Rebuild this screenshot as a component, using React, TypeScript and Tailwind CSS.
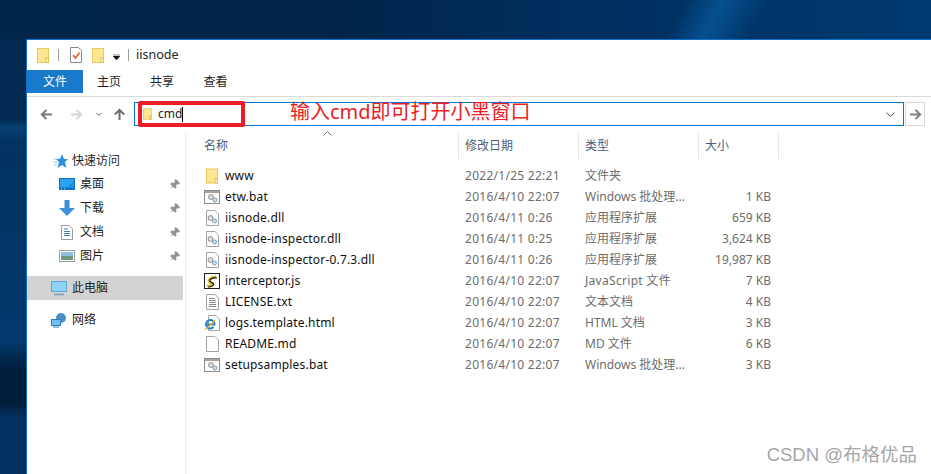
import { Pin } from 'lucide-react';
import type { ReactNode } from 'react';

const files = [
  { name: 'www', date: '2022/1/25 22:21', type: '文件夹', size: '', icon: 'folder' },
  { name: 'etw.bat', date: '2016/4/10 22:07', type: 'Windows 批处理...', size: '1 KB', icon: 'bat' },
  { name: 'iisnode.dll', date: '2016/4/11 0:26', type: '应用程序扩展', size: '659 KB', icon: 'dll' },
  { name: 'iisnode-inspector.dll', date: '2016/4/11 0:25', type: '应用程序扩展', size: '3,624 KB', icon: 'dll' },
  { name: 'iisnode-inspector-0.7.3.dll', date: '2016/4/11 0:26', type: '应用程序扩展', size: '19,987 KB', icon: 'dll' },
  { name: 'interceptor.js', date: '2016/4/10 22:07', type: 'JavaScript 文件', size: '7 KB', icon: 'js' },
  { name: 'LICENSE.txt', date: '2016/4/10 22:07', type: '文本文档', size: '4 KB', icon: 'txt' },
  { name: 'logs.template.html', date: '2016/4/10 22:07', type: 'HTML 文档', size: '3 KB', icon: 'ie' },
  { name: 'README.md', date: '2016/4/10 22:07', type: 'MD 文件', size: '6 KB', icon: 'blank' },
  { name: 'setupsamples.bat', date: '2016/4/10 22:07', type: 'Windows 批处理...', size: '3 KB', icon: 'bat' },
];

function FolderIcon({ className = 'w-3 h-[15px]' }: { className?: string }) {
  return (
    <svg viewBox="0 0 12 15" className={className}>
      <rect x="0.5" y="0.5" width="11" height="14" fill="#fde592" stroke="#eac95f" />
      <rect x="9" y="10" width="2.5" height="4.5" fill="#fff3c4" stroke="#e0b93f" strokeWidth="0.8" />
    </svg>
  );
}

function Gears({ x = 3, y = 4 }: { x?: number; y?: number }) {
  return (
    <g>
      <circle cx={x + 3} cy={y + 3} r="2.4" fill="#e2e2e2" stroke="#8c8c8c" />
      <circle cx={x + 7} cy={y + 6} r="2" fill="#cfe3f3" stroke="#7f9db5" />
    </g>
  );
}

function FileIcon({ kind }: { kind: string }) {
  if (kind === 'folder') return <FolderIcon className="w-3 h-4" />;
  if (kind === 'bat') {
    return (
      <svg viewBox="0 0 16 14" className="w-4 h-[14px]">
        <rect x="0.5" y="0.5" width="15" height="13" fill="#fff" stroke="#8a8a8a" />
        <rect x="1" y="1" width="14" height="2" fill="#a5a5a5" />
        <Gears x={4} y={4} />
      </svg>
    );
  }
  if (kind === 'dll') {
    return (
      <svg viewBox="0 0 13 16" className="w-[13px] h-4">
        <path d="M.5.5H9L12.5 4V15.5H.5Z" fill="#fdfdfd" stroke="#a3a3a3" />
        <Gears x={1.5} y={5} />
      </svg>
    );
  }
  if (kind === 'js') {
    return (
      <svg viewBox="0 0 16 16" className="w-4 h-4">
        <rect x="0.5" y="0.5" width="15" height="15" fill="#fff" stroke="#222" />
        <path d="M3 12.5C7 14 11 12 6 9.5C3 8 6 4 12 3.5" fill="none" stroke="#d6bd1c" strokeWidth="2.6" />
        <path d="M4 14C9 14 12 11 7 9C4 7.5 7 4.5 13 5" fill="none" stroke="#111" strokeWidth="1.2" />
      </svg>
    );
  }
  if (kind === 'txt') {
    return (
      <svg viewBox="0 0 13 16" className="w-[13px] h-4">
        <path d="M.5.5H9L12.5 4V15.5H.5Z" fill="#fff" stroke="#a3a3a3" />
        <path d="M3 4.5H9M3 6.5H10M3 8.5H10M3 10.5H10M3 12.5H10" stroke="#8a8a8a" />
      </svg>
    );
  }
  if (kind === 'ie') {
    return (
      <svg viewBox="0 0 16 16" className="w-4 h-4">
        <path d="M4.500.5H12L15.500 4V15.500H4.500Z" fill="#fff" stroke="#a3a3a3" />
        <path d="M3 9.500H10.500A4.200 4.200 0 1 0 9.500 12" fill="none" stroke="#1f80d4" strokeWidth="2" />
        <path d="M0.700 14C2 15 6 11 11 5" fill="none" stroke="#f0b429" strokeWidth="1.300" />
      </svg>
    );
  }
  return (
    <svg viewBox="0 0 13 16" className="w-[13px] h-4">
      <path d="M.5.5H9L12.5 4V15.5H.5Z" fill="#fff" stroke="#a3a3a3" />
    </svg>
  );
}

function ArrowIcon({ dir, color }: { dir: 'left' | 'right' | 'up'; color: string }) {
  const d = dir === 'left' ? 'M13 7H2M7 2L2 7L7 12' : dir === 'right' ? 'M1 7H12M7 2L12 7L7 12' : 'M7 13V2M2 7L7 2L12 7';
  return (
    <svg viewBox="0 0 14 14" className="w-[13px] h-[13px]">
      <path d={d} fill="none" stroke={color} strokeWidth="2.2" />
    </svg>
  );
}

function NavPin() {
  return <Pin className="w-[11px] h-[11px] text-[#8d9499] fill-[#8d9499] rotate-45" />;
}

const navIcons: Record<string, ReactNode> = {
  桌面: (
    <svg viewBox="0 0 16 12" className="w-4 h-3">
      <rect width="16" height="12" fill="#0b6fc4" />
      <path d="M1 1H15V9.500H1Z" fill="#2ba3f2" />
      <path d="M8 9.500L15 3V9.500Z" fill="#1c8fe2" />
      <path d="M2 11H3M5 11H6" stroke="#cfe8fb" />
    </svg>
  ),
  下载: (
    <svg viewBox="0 0 16 16" className="w-4 h-4">
      <path d="M5.500 0H10.500V8H16L8 16L0 8H5.500Z" fill="#3f8fdc" />
    </svg>
  ),
  文档: (
    <svg viewBox="0 0 12 15" className="w-3 h-[15px]">
      <path d="M.5.5H8L11.500 4V14.500H.5Z" fill="#fff" stroke="#9a9a9a" />
      <path d="M3 4H7M3 6.500H9M3 8.500H9M3 10.500H9" stroke="#3f7fb8" />
    </svg>
  ),
  图片: (
    <svg viewBox="0 0 16 12" className="w-4 h-3">
      <rect x="0.5" y="0.5" width="15" height="11" fill="#fff" stroke="#9a9a9a" />
      <rect x="2" y="2" width="12" height="4" fill="#8fbde0" />
      <rect x="2" y="6" width="12" height="4" fill="#6f9a80" />
    </svg>
  ),
};

export default function App() {
  return (
    <div className="w-[931px] h-[474px] relative overflow-hidden flex flex-col bg-[linear-gradient(180deg,#02294f_0%,#02294f_25%,#063f73_27%,#03335f_30%,#023a6e_72%,#011d3c_78%,#011d3c_85%,#03305e_88%,#03305e_100%)] font-['Noto_Sans','Noto_Sans_CJK_SC',sans-serif] text-[12px] text-[#1e1e1e]">
      {/* wallpaper band above the window */}
      <div className="h-[39px] shrink-0 bg-[linear-gradient(118deg,transparent_0%,transparent_72%,#05508f_76%,transparent_81%),linear-gradient(90deg,#01264c_0%,#012448_35%,#002c5a_55%,#003a72_100%)]" />
      <div className="flex-1 flex pl-[26px] min-h-0">
        <div className="flex-1 flex flex-col bg-white border-t border-l border-[#0e6fc6]">
          {/* title bar */}
          <div className="h-[30px] flex items-center pl-[10px] shrink-0">
            <FolderIcon />
            <div className="w-px h-3 bg-[#9a9a9a] ml-[9px] mr-[11px]" />
            <svg viewBox="0 0 12 16" className="w-3 h-4">
              <path d="M.5.5H8.500L11.500 3.500V15.500H.5Z" fill="#fff" stroke="#8a8a8a" />
              <path d="M3 8L5.500 11L9.500 5.500" fill="none" stroke="#e0592a" strokeWidth="1.500" />
            </svg>
            <FolderIcon className="w-3 h-[15px] ml-[10px]" />
            <svg viewBox="0 0 7 6" className="w-[7px] h-[6px] ml-[9px] mt-1">
              <path d="M0 0H7M0 2H7L3.500 6Z" fill="#111" stroke="#111" strokeWidth="0.5" />
            </svg>
            <div className="w-px h-3 bg-[#9a9a9a] ml-[8px] mr-[7px]" />
            <span className="text-[12.5px]">iisnode</span>
          </div>
          {/* ribbon tabs */}
          <div className="h-[27px] flex shrink-0 border-b border-[#dadada]">
            <div className="w-[56px] h-[23px] bg-[#1979ca] text-white flex items-center justify-center">文件</div>
            <div className="w-[52px] h-[23px] flex items-center justify-center">主页</div>
            <div className="w-[54px] h-[23px] flex items-center justify-center">共享</div>
            <div className="w-[53px] h-[23px] flex items-center justify-center">查看</div>
          </div>
          {/* address bar */}
          <div className="h-[35px] flex items-start pt-[5px] shrink-0">
            <div className="flex items-center w-[107px] h-6 pl-[13px]">
              <ArrowIcon dir="left" color="#7a7a7a" />
              <span className="w-[17px]" />
              <ArrowIcon dir="right" color="#d6d6d6" />
              <svg viewBox="0 0 7 5" className="w-[6px] h-[5px] ml-[13px]">
                <path d="M.5.5L3.500 3.500L6.500.5" fill="none" stroke="#8a8a8a" strokeWidth="1.200" />
              </svg>
              <span className="w-[11px]" />
              <ArrowIcon dir="up" color="#6e6e6e" />
            </div>
            <div className="w-[770px] h-6 border border-[#0078d7] flex items-center pl-[8px] pr-2">
              <FolderIcon className="w-[9px] h-[14px]" />
              <span className="ml-[6px] text-[12px] leading-none">cmd</span>
              <div className="w-px h-[15px] bg-black" />
              <svg viewBox="0 0 9 5" className="w-[9px] h-[5px] ml-auto">
                <path d="M.5.5L4.500 4.500L8.500.5" fill="none" stroke="#555" />
              </svg>
            </div>
            <div className="w-[20px] h-6 border border-[#d9d9d9] ml-px flex items-center justify-center">
              <ArrowIcon dir="right" color="#808080" />
            </div>
          </div>
          {/* body */}
          <div className="flex-1 flex">
            <nav className="w-[159px] border-r border-[#ececec] shrink-0 pt-[16px]">
              <div className="h-6 flex items-center pl-[27px] pt-[2px] gap-[4px]">
                <svg viewBox="0 0 14 14" className="w-[14px] h-[14px]">
                  <path d="M8 0L10 5L14 5L11 8L12.500 14L8 11L3.500 14L5 8L2 5L6 5Z" fill="#2f8fdc" />
                  <path d="M0 5H3M0 8H3M0 11H3" stroke="#8cc4ee" />
                </svg>
                <span>快速访问</span>
              </div>
              {['桌面', '下载', '文档', '图片'].map((label) => (
                <div key={label} className="h-6 flex items-center">
                  <span className="w-4 ml-[32px] flex items-center justify-center">{navIcons[label]}</span>
                  <span className="ml-[5px]">{label}</span>
                  <span className="ml-auto mr-[5px]">
                    <NavPin />
                  </span>
                </div>
              ))}
              <div className="h-6 mt-[8px] mr-[2px] bg-[#d3d3d3] flex items-center pl-6 gap-[5px]">
                <svg viewBox="0 0 16 15" className="w-4 h-[15px]">
                  <rect x="0.5" y="0.5" width="15" height="10" fill="#8fd3f7" stroke="#5ea8d4" />
                  <path d="M3 13.500H13" stroke="#7a9cb2" strokeWidth="1.500" />
                </svg>
                <span>此电脑</span>
              </div>
              <div className="h-6 mt-2 flex items-center pl-6 gap-[5px]">
                <svg viewBox="0 0 16 15" className="w-4 h-[15px]">
                  <circle cx="10" cy="5" r="5" fill="#4a90c8" />
                  <rect x="0.5" y="6.500" width="9" height="6" fill="#6fc0ee" stroke="#2f80b8" />
                  <path d="M2 14H8" stroke="#2f80b8" />
                </svg>
                <span>网络</span>
              </div>
            </nav>
            <main className="flex-1 min-w-0">
              <div className="relative h-[33px] flex text-[#4c607a] pt-[1px]">
                <svg viewBox="0 0 9 5" className="absolute left-[137px] top-[-1px] w-[9px] h-[5px]">
                  <path d="M.5 4.500L4.500.5L8.500 4.500" fill="none" stroke="#777" />
                </svg>
                <div className="w-[273px] h-[26px] border-r border-[#e5e5e5] flex items-center pl-[18px]">名称</div>
                <div className="w-[120px] h-[26px] border-r border-[#e5e5e5] flex items-center pl-[6px]">修改日期</div>
                <div className="w-[120px] h-[26px] border-r border-[#e5e5e5] flex items-center pl-[6px]">类型</div>
                <div className="w-[80px] h-[26px] border-r border-[#e5e5e5] flex items-center pl-[6px]">大小</div>
              </div>
              <div>
                {files.map((f) => (
                  <div key={f.name} className="h-[21px] flex items-center">
                    <div className="w-[273px] flex items-center pl-[18px]">
                      <span className="w-4 flex justify-center shrink-0">
                        <FileIcon kind={f.icon} />
                      </span>
                      <span className="ml-[5px] text-[#0f0f0f] tracking-[0.18px]">{f.name}</span>
                    </div>
                    <div className="w-[120px] pl-[6px] text-[#6d6d6d] tracking-[0.27px]">{f.date}</div>
                    <div className={f.icon === 'js' ? 'w-[120px] pl-[6px] text-[#6d6d6d] tracking-[0.3px]' : 'w-[120px] pl-[6px] text-[#6d6d6d]'}>{f.type}</div>
                    <div className="w-[72px] text-right text-[#6d6d6d]">{f.size}</div>
                  </div>
                ))}
              </div>
            </main>
          </div>
        </div>
      </div>
      {/* annotation drawn over the screenshot */}
      <div className="absolute left-[138px] top-[101px] w-[107px] h-[26px] border-[4px] border-[#ee1c25] rounded-[2px]" />
      <div className="absolute left-[290px] top-[99px] text-[20px] leading-[26px] text-[#ee1c25]">输入cmd即可打开小黑窗口</div>
      <div className="absolute right-[14px] bottom-[7px] text-[18.500px] leading-[24px] text-[#a6a6a6] font-['Liberation_Sans','Noto_Sans_CJK_SC',sans-serif]">CSDN @布格优品</div>
    </div>
  );
}
